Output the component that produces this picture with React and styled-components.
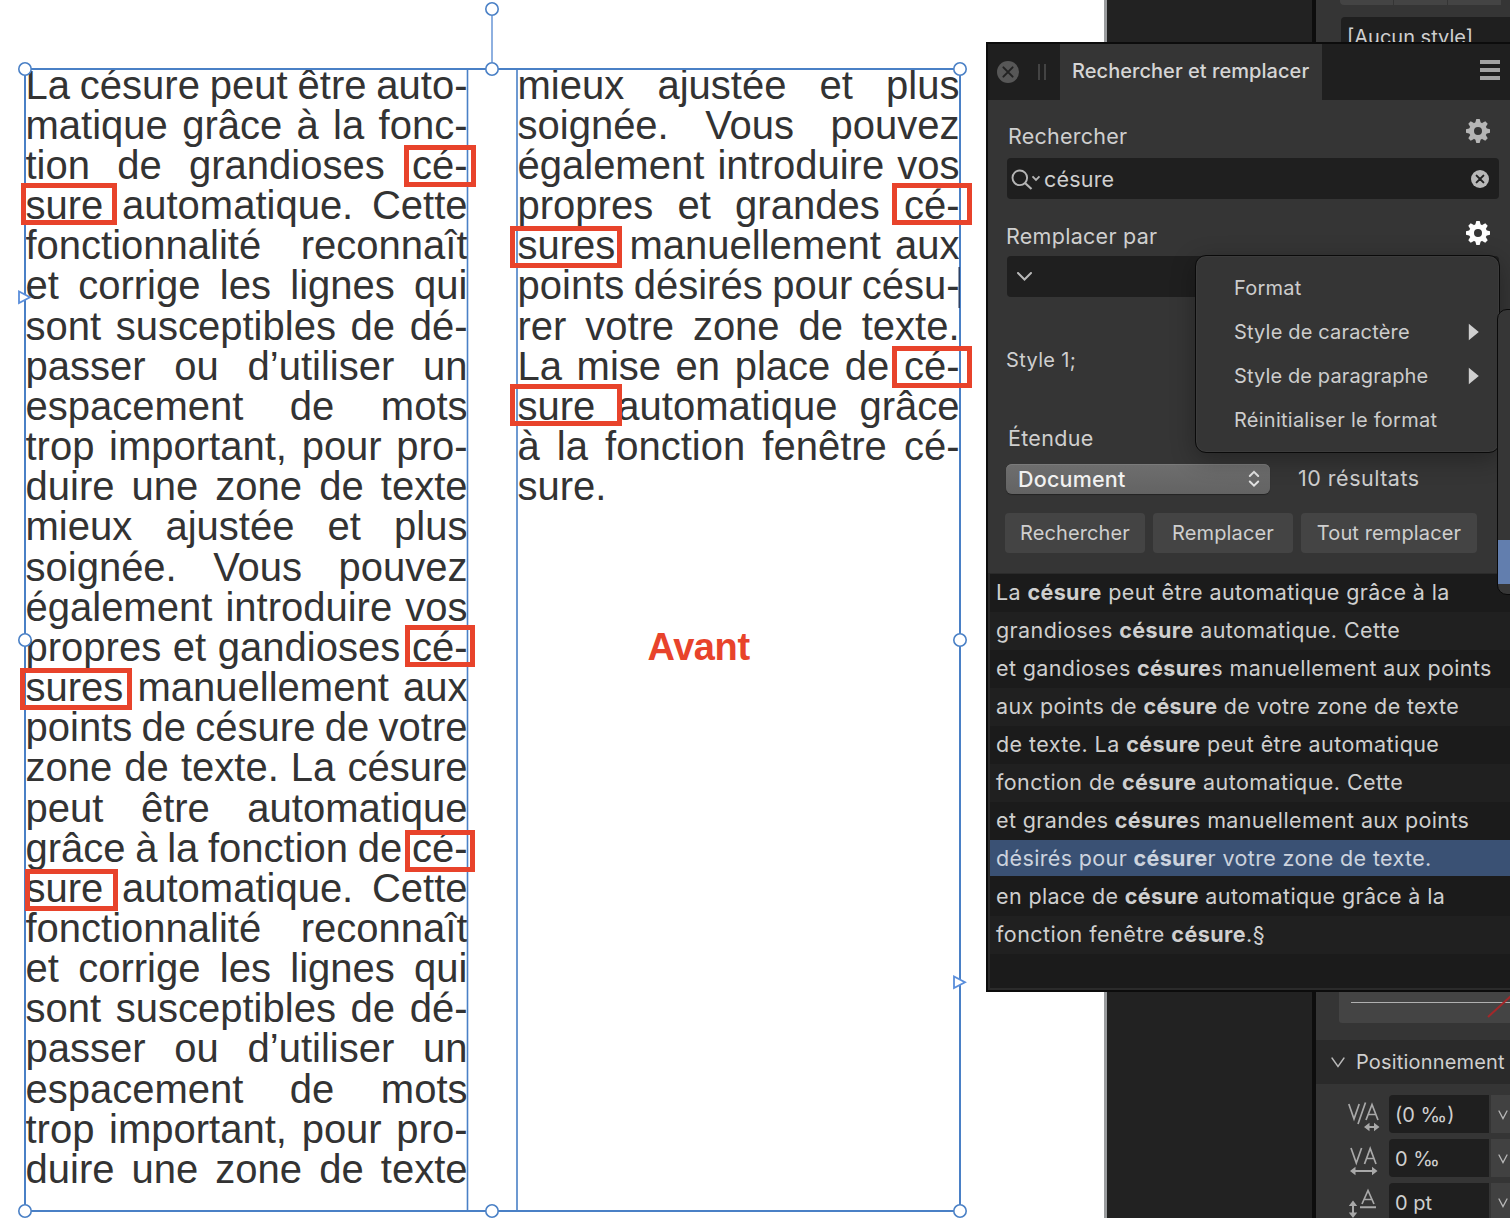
import React from 'react';
import styled, { createGlobalStyle, css } from 'styled-components';

const GlobalStyle = createGlobalStyle`
  * {
    box-sizing: border-box;
  }
  body {
    margin: 0;
    background: #222;
  }
`;

const Screen = styled.div`
  position: relative;
  display: flex;
  width: 1510px;
  height: 1218px;
  overflow: hidden;
  background: #222;
  font-family: Inter, 'Liberation Sans', sans-serif;
  font-size: 20px;
  color: #cfcfcf;
`;

/* ---------- document ---------- */

const Page = styled.main`
  position: relative;
  flex: none;
  width: 1107px;
  height: 1218px;
  padding: 64.7px 0 0 25.5px;
  display: flex;
  gap: 50px;
  background: #fff;
  border-right: 3px solid #9a9c9e;
`;

const Column = styled.div`
  width: 442px;
  font-family: 'Liberation Sans', Arial, sans-serif;
  font-size: 40px;
  color: #333;
`;

const Line = styled.div`
  height: 40.17px;
  line-height: 40.17px;
  white-space: nowrap;
  word-spacing: -3px;
  text-align: justify;
  text-align-last: ${p => (p.$last ? 'left' : 'justify')};
`;

const FrameOverlay = styled.svg`
  position: absolute;
  left: 0;
  top: 0;
`;

const Mark = styled.div`
  position: absolute;
  left: ${p => p.$x}px;
  top: ${p => p.$y}px;
  width: ${p => p.$w}px;
  height: ${p => p.$h}px;
  border: 5px solid #e8432b;
`;

const Stamp = styled.div`
  position: absolute;
  left: 647.5px;
  top: 625px;
  font: bold 38px/44px 'Liberation Sans', Arial, sans-serif;
  letter-spacing: -0.4px;
  color: #e8432b;
`;

/* ---------- docked panel on the right ---------- */

const Dock = styled.aside`
  flex: none;
  display: flex;
  flex-direction: column;
  margin-left: 205px;
  width: 198px;
  height: 1218px;
  border-left: 4px solid #0d0d0d;
  background: #353535;
  overflow: hidden;

  > * {
    flex: none;
  }
`;

const Segments = styled.div`
  display: flex;
  gap: 1px;
  height: 5px;
  margin-left: 24px;
  border-radius: 0 0 0 4px;
  background: #353535;
  overflow: hidden;
`;

const Segment = styled.div`
  flex: none;
  width: 53px;
  background: #444;
`;

const StyleField = styled.div`
  margin: 12px 0 0 25px;
  height: 40px;
  padding-left: 6px;
  line-height: 40px;
  border-radius: 4px 0 0 0;
  background: #1f1f1f;
  white-space: nowrap;
`;

const Decoration = styled.div`
  margin: 903px 0 17px 23px;
  height: 63px;
  background: #444;
  border-radius: 0 0 0 3px;
`;

const Section = styled.div`
  display: flex;
  align-items: center;
  height: 44px;
  padding-left: 15px;
  gap: 11px;
  background: #2a2a2a;
  white-space: nowrap;
  letter-spacing: 0.18px;
`;

const Metrics = styled.div`
  display: grid;
  grid-template-columns: 32px 100px 40px;
  grid-auto-rows: 38px;
  row-gap: 6px;
  margin: 11px 0 0 32px;
`;

const MetricValue = styled.div`
  margin-left: 9px;
  width: 100px;
  padding-left: 6px;
  height: 38px;
  line-height: 41px;
  border-radius: 4px 0 0 4px;
  background: #1f1f1f;
`;

const MetricDrop = styled.div`
  margin-left: 11px;
  padding: 15px 0 0 7px;
  line-height: 0;
  background: #414141;
`;

/* ---------- find and replace ---------- */

const Panel = styled.section`
  position: absolute;
  left: 986px;
  top: 42px;
  width: 540px;
  height: 950px;
  border: 2px solid #0c0c0c;
  background: #353535;
`;

const TabBar = styled.header`
  display: flex;
  align-items: center;
  height: 56px;
  padding-left: 9px;
  background: #1f1f1f;
`;

const Tab = styled.div`
  width: 262px;
  height: 56px;
  margin: 0 158px 0 14px;
  padding-left: 12px;
  line-height: 54px;
  background: #353535;
  color: #d6d6d6;
  white-space: nowrap;
  font-weight: 500;
  letter-spacing: ${p => p.$ls}px;
`;

const Grip = styled.div`
  width: 8px;
  height: 16px;
  margin-left: 19px;
  border: solid #434343;
  border-width: 0 2px;
`;

const Burger = styled.div`
  width: 20px;
  height: 20px;
  background: linear-gradient(#a3a3a3 4px, transparent 4px 8px, #a3a3a3 8px 12px, transparent 12px 16px, #a3a3a3 16px);
  margin-top: -4px;
`;

const Heading = styled.div`
  display: flex;
  justify-content: space-between;
  align-items: center;
  width: ${p => p.$w || 483}px;
  height: 30px;
  margin: ${p => p.$m};
  font-size: 21.5px;
  letter-spacing: ${p => p.$ls}px;

  svg {
    margin-bottom: ${p => p.$lift || 0}px;
  }
`;

const Field = styled.div`
  display: flex;
  align-items: center;
  width: 492px;
  height: 41px;
  margin-left: 19px;
  padding: 0 10px 0 ${p => p.$pl}px;
  border-radius: 4px;
  background: #1f1f1f;
  font-size: 21.5px;
`;

const Query = styled.span`
  flex: 1;
  margin-left: 3px;
  letter-spacing: ${p => p.$ls}px;
`;

const StyleNote = styled.div`
  margin: 50px 0 0 18px;
  height: 26px;
  line-height: 26px;
  letter-spacing: ${p => p.$ls}px;
`;

const ScopeRow = styled.div`
  display: flex;
  align-items: center;
  margin: 11px 0 0 18px;
  height: 30px;
  gap: 28px;
  font-size: 21.5px;
`;

const Select = styled.div`
  display: flex;
  align-items: center;
  justify-content: space-between;
  width: 264px;
  height: 30px;
  padding: 0 10px 0 12px;
  border-radius: 6px;
  background: linear-gradient(#6e6e6e, #636363);
  box-shadow: 0 1px 1px rgba(0, 0, 0, 0.35), inset 0 1px 0 #7b7b7b;
  color: #f1f1f1;
  font-weight: 500;
  letter-spacing: ${p => p.$ls}px;
`;

const Count = styled.span`
  padding-bottom: 2px;
  letter-spacing: ${p => p.$ls}px;
`;

const Buttons = styled.div`
  display: flex;
  gap: 8px;
  margin: 19px 0 20px 17px;
`;

const Button = styled.button`
  width: ${p => p.$w}px;
  height: 40px;
  padding: 0;
  border: 0;
  border-radius: 4px;
  background: #444;
  color: #cfcfcf;
  font: inherit;
  white-space: nowrap;
  letter-spacing: 0.12px;
`;

const Results = styled.div`
  height: 417px;
  border: solid #2b2b2b;
  border-width: 1px 0 2px 2px;
  background: #1b1b1b;
`;

const selected = css`
  background: linear-gradient(#3a5174 36px, #1b1b1b 36px);
  color: #ccd3de;
`;

const Result = styled.div`
  height: 38px;
  padding-left: 6px;
  line-height: 37px;
  font-size: 21.5px;
  white-space: pre;
  letter-spacing: ${p => p.$ls}px;

  &:nth-child(even) {
    background: #202020;
  }
  && {
    ${p => p.$selected && selected}
  }
  b {
    font-weight: 700;
  }
`;

/* ---------- context menu ---------- */

const Menu = styled.div`
  position: absolute;
  left: 1195px;
  top: 255px;
  width: 305px;
  height: 198px;
  padding: 10px 20px 0 38px;
  border: 1px solid #0a0a0a;
  border-radius: 11px;
  background: #353535;
  box-shadow: inset 0 0 0 1px #3b3b3b, 0 6px 24px rgba(0, 0, 0, 0.3);
`;

const MenuItem = styled.div`
  display: flex;
  align-items: center;
  justify-content: space-between;
  height: 44px;
  color: #cdcdcd;
  white-space: nowrap;
  letter-spacing: ${p => p.$ls}px;
`;

const SubMenu = styled.div`
  position: absolute;
  left: 1497px;
  top: 309px;
  width: 40px;
  height: 286px;
  padding-top: 230px;
  border: 1px solid #0a0a0a;
  border-radius: 10px;
  background: #363636;
`;

const SubMenuHighlight = styled.div`
  height: 44px;
  background: #627eae;
`;

/* ---------- icons ---------- */

const Gear = ({ color }) => (
  <svg width="26" height="26" viewBox="-13 -13 26 26">
    <circle r="6.5" fill="none" stroke={color} strokeWidth="5" />
    {[0, 45, 90, 135, 180, 225, 270, 315].map(a => (
      <path key={a} d="M-2.8 -8 L-1.7 -12 H1.7 L2.8 -8 Z" fill={color} transform={`rotate(${a})`} />
    ))}
  </svg>
);

const CrossDisc = ({ r, fill, stroke, arm }) => (
  <svg width={r * 2} height={r * 2} viewBox={`${-r} ${-r} ${r * 2} ${r * 2}`}>
    <circle r={r} fill={fill} />
    <path d={`M${-arm} ${-arm}L${arm} ${arm}M${arm} ${-arm}L${-arm} ${arm}`} stroke={stroke} strokeWidth="2" strokeLinecap="round" />
  </svg>
);

const Chevron = ({ w, h, color, sw = 2 }) => (
  <svg width={w} height={h} viewBox={`0 0 ${w} ${h}`} fill="none" stroke={color} strokeWidth={sw}>
    <path d={`M1 1L${w / 2} ${h - 1.5}L${w - 1} 1`} strokeLinecap="round" />
  </svg>
);

const SearchIcon = () => (
  <svg width="30" height="24" viewBox="0 0 30 24" fill="none" stroke="#b5b5b5" strokeWidth="1.9">
    <circle cx="8.8" cy="10.8" r="7.3" />
    <path d="M14 16L20.5 22" strokeWidth="2.2" />
    <path d="M21.5 9.3L25 12.8L28.5 9.3" />
  </svg>
);

const Arrow = () => (
  <svg width="11" height="18" viewBox="0 0 11 18">
    <path d="M0.8 0.8L10.8 9L0.8 17.2Z" fill="#cfcfcf" />
  </svg>
);

const UpDown = () => (
  <svg width="12" height="18" viewBox="0 0 12 18" fill="none" stroke="#e2e2e2" strokeWidth="2" strokeLinecap="round">
    <path d="M1.8 6L6 1.8L10.2 6M1.8 11.5L6 15.7L10.2 11.5" />
  </svg>
);

const KerningIcon = () => (
  <svg width="32" height="38" viewBox="0 0 32 38" fill="none" stroke="#a9a9a9" strokeWidth="1.7">
    <path d="M0.8 9L6 24L11.2 9M10 29L17.5 7.5M18 25L24 9.5L30 25M20 19.5H28" />
    <path d="M19 32H29" strokeWidth="2" />
    <path d="M16 32L21.5 27.8V36.2ZM31.5 32L26 27.8V36.2Z" fill="#a9a9a9" stroke="none" />
  </svg>
);

const TrackingIcon = () => (
  <svg width="32" height="38" viewBox="0 0 32 38" fill="none" stroke="#a9a9a9" strokeWidth="1.7">
    <path d="M3 9L8.3 24L13.6 9M16.5 25L22.2 9.5L28 25M18.5 19.5H26" />
    <path d="M5 32H26" strokeWidth="2" />
    <path d="M2 32L7.5 27.8V36.2ZM29.5 32L24 27.8V36.2Z" fill="#a9a9a9" stroke="none" />
  </svg>
);

const BaselineIcon = () => (
  <svg width="32" height="38" viewBox="0 0 32 38" fill="none" stroke="#a9a9a9" strokeWidth="1.7">
    <path d="M14 21L20 7.5L26 21M16 16.5H24" />
    <path d="M12 24.2H28M5 20V32" strokeWidth="2" />
    <path d="M5 17.5L0.8 23H9.2ZM5 35L0.8 29.5H9.2Z" fill="#a9a9a9" stroke="none" />
  </svg>
);

const LineSample = () => (
  <svg width="172" height="63" viewBox="0 0 172 63">
    <path d="M12 42.5H172" stroke="#b0b0b0" />
    <path d="M149 57L173 35" stroke="#a3282a" strokeWidth="2" />
  </svg>
);

/* ---------- content ---------- */

const leftLines = [
  'La césure peut être auto-',
  'matique grâce à la fonc-',
  'tion de grandioses cé-',
  'sure automatique. Cette',
  'fonctionnalité reconnaît',
  'et corrige les lignes qui',
  'sont susceptibles de dé-',
  'passer ou d’utiliser un',
  'espacement de mots',
  'trop important, pour pro-',
  'duire une zone de texte',
  'mieux ajustée et plus',
  'soignée. Vous pouvez',
  'également introduire vos',
  'propres et gandioses cé-',
  'sures manuellement aux',
  'points de césure de votre',
  'zone de texte. La césure',
  'peut être automatique',
  'grâce à la fonction de cé-',
  'sure automatique. Cette',
  'fonctionnalité reconnaît',
  'et corrige les lignes qui',
  'sont susceptibles de dé-',
  'passer ou d’utiliser un',
  'espacement de mots',
  'trop important, pour pro-',
  'duire une zone de texte',
];

const rightLines = [
  'mieux ajustée et plus',
  'soignée. Vous pouvez',
  'également introduire vos',
  'propres et grandes cé-',
  'sures manuellement aux',
  'points désirés pour césu-',
  'rer votre zone de texte.',
  'La mise en place de cé-',
  'sure automatique grâce',
  'à la fonction fenêtre cé-',
  'sure.',
];

const marks = [
  [404, 145, 72, 42],
  [21, 183, 96, 42],
  [405, 625, 70, 42],
  [20, 668, 112, 42],
  [405, 830, 70, 42],
  [25, 869, 93, 42],
  [892, 183, 80, 42],
  [510, 226, 112, 42],
  [892, 346, 80, 42],
  [510, 384, 112, 42],
];

const handles = [
  [492, 9],
  [25, 69],
  [492, 69],
  [960, 69],
  [25, 640],
  [960, 640],
  [25, 1211],
  [492, 1211],
  [960, 1211],
];

const results = [
  ['La ', 'césure', ' peut être automatique grâce à la', 0.39],
  ['grandioses ', 'césure', ' automatique. Cette', 0.42],
  ['et gandioses ', 'césure', 's manuellement aux points', 0.38],
  ['aux points de ', 'césure', ' de votre zone de texte', 0.35],
  ['de texte. La ', 'césure', ' peut être automatique', 0.42],
  ['fonction de ', 'césure', ' automatique. Cette', 0.43],
  ['et grandes ', 'césure', 's manuellement aux points', 0.37],
  ['désirés pour ', 'césure', 'r votre zone de texte.', 0.36],
  ['en place de ', 'césure', ' automatique grâce à la', 0.37],
  ['fonction fenêtre ', 'césure', '.§', 0.46],
];

const Document = () => (
  <Page>
    <Column>
      {leftLines.map((text, i) => (
        <Line key={i}>{text}</Line>
      ))}
    </Column>
    <Column>
      {rightLines.map((text, i) => (
        <Line key={i} $last={i === rightLines.length - 1}>{text}</Line>
      ))}
    </Column>
    <FrameOverlay width="1000" height="1218" fill="none" stroke="#4a80c6" strokeWidth="2">
      <path d="M492 16V62" stroke="#8eb0e0" />
      <path d="M25 69H960V1211H25Z" />
      <path d="M467.5 69V1211M517 69V1211" strokeWidth="1.6" />
      <path d="M959.2 267V308" stroke="#26395c" strokeWidth="1.4" />
      <path d="M19 291.5V303L30 297.2ZM954 976.5V988L965 982.2Z" fill="#fff" stroke="#5a8edb" strokeWidth="1.8" />
      {handles.map(([x, y]) => (
        <circle key={`${x}-${y}`} cx={x} cy={y} r="6.2" fill="#fff" strokeWidth="1.6" />
      ))}
    </FrameOverlay>
    {marks.map(([x, y, w, h]) => (
      <Mark key={`${x}-${y}`} $x={x} $y={y} $w={w} $h={h} />
    ))}
    <Stamp>Avant</Stamp>
  </Page>
);

const SideDock = () => (
  <Dock>
    <Segments>
      <Segment />
      <Segment />
      <Segment />
    </Segments>
    <StyleField>[Aucun style]</StyleField>
    <Decoration>
      <LineSample />
    </Decoration>
    <Section>
      <Chevron w={14} h={11} color="#b8b8b8" sw={1.4} />
      Positionnement
    </Section>
    <Metrics>
      <KerningIcon />
      <MetricValue>(0 ‰)</MetricValue>
      <MetricDrop><Chevron w={10} h={10} color="#b8b8b8" sw={1.3} /></MetricDrop>
      <TrackingIcon />
      <MetricValue>0 ‰</MetricValue>
      <MetricDrop><Chevron w={10} h={10} color="#b8b8b8" sw={1.3} /></MetricDrop>
      <BaselineIcon />
      <MetricValue>0 pt</MetricValue>
      <MetricDrop><Chevron w={10} h={10} color="#b8b8b8" sw={1.3} /></MetricDrop>
    </Metrics>
  </Dock>
);

const FindPanel = () => (
  <Panel>
    <TabBar>
      <CrossDisc r={11} fill="#575757" stroke="#222" arm={4.6} />
      <Grip />
      <Tab $ls={0.05}>Rechercher et remplacer</Tab>
      <Burger />
    </TabBar>
    <Heading $m="21px 0 7px 20px" $ls={0.25} $lift={10}>
      Rechercher
      <Gear color="#b5b5b5" />
    </Heading>
    <Field $pl={4}>
      <SearchIcon />
      <Query $ls={0.2}>césure</Query>
      <CrossDisc r={9} fill="#b8b8b8" stroke="#222" arm={3.4} />
    </Field>
    <Heading $m="22px 0 5px 18px" $w={485} $ls={0.28} $lift={6}>
      Remplacer par
      <Gear color="#fff" />
    </Heading>
    <Field $pl={10}>
      <Chevron w={15} h={9} color="#b8b8b8" />
    </Field>
    <StyleNote $ls={0.35}>Style 1;</StyleNote>
    <Heading $m="50px 0 0 20px" $ls={0.3}>Étendue</Heading>
    <ScopeRow>
      <Select $ls={0.2}>
        Document
        <UpDown />
      </Select>
      <Count $ls={0.5}>10 résultats</Count>
    </ScopeRow>
    <Buttons>
      <Button $w={140}>Rechercher</Button>
      <Button $w={140}>Remplacer</Button>
      <Button $w={176}>Tout remplacer</Button>
    </Buttons>
    <Results>
      {results.map(([before, match, after, ls], i) => (
        <Result key={i} $selected={i === 7} $ls={ls}>
          {before}
          <b>{match}</b>
          {after}
        </Result>
      ))}
    </Results>
  </Panel>
);

const App = () => (
  <Screen>
    <GlobalStyle />
    <Document />
    <SideDock />
    <FindPanel />
    <Menu>
      <MenuItem $ls={0.25}>Format</MenuItem>
      <MenuItem $ls={0.17}>Style de caractère<Arrow /></MenuItem>
      <MenuItem $ls={0.12}>Style de paragraphe<Arrow /></MenuItem>
      <MenuItem $ls={0.25}>Réinitialiser le format</MenuItem>
    </Menu>
    <SubMenu>
      <SubMenuHighlight />
    </SubMenu>
  </Screen>
);

export default App;
